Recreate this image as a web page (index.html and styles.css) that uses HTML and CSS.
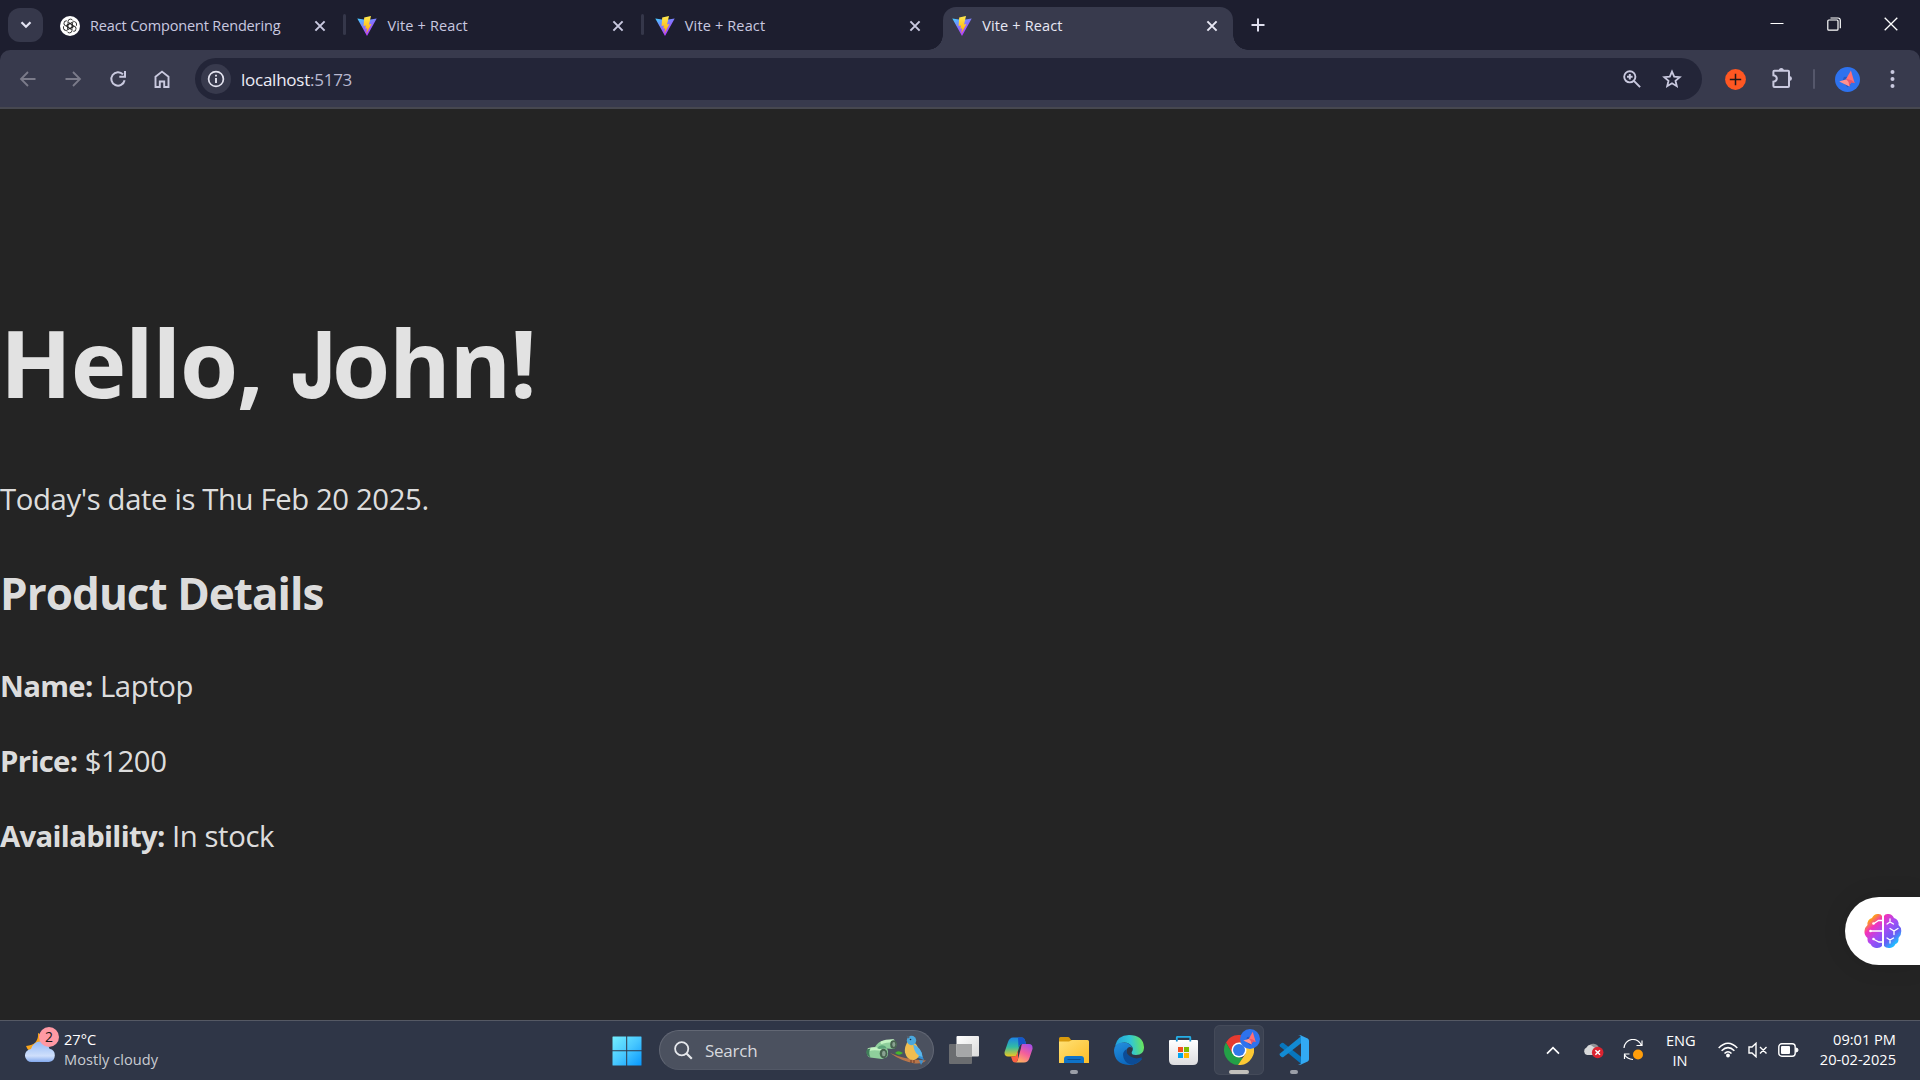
FILE: index.html
```html
<!DOCTYPE html>
<html lang="en">
<head>
<meta charset="utf-8">
<title>Vite + React</title>
<link rel="stylesheet" href="styles.css">
</head>
<body>
<svg class="defs" width="0" height="0" aria-hidden="true">
  <defs>
    <linearGradient id="viteBody" x1="0" y1="0" x2=".6" y2="1"><stop offset="0" stop-color="#41d1ff"/><stop offset=".55" stop-color="#8a6cff"/><stop offset="1" stop-color="#bd34fe"/></linearGradient>
    <linearGradient id="viteBolt" x1="0" y1="0" x2="0" y2="1"><stop offset="0" stop-color="#ffea50"/><stop offset="1" stop-color="#ffa800"/></linearGradient>
    <symbol id="vite" viewBox="0 0 20 20">
      <path d="M.3 2.400 10 20 19.700 2.400 10.400 4.100Z" fill="url(#viteBody)"/>
      <path d="M14 .1 7.200 1.400 6.600 10l2.300-.5-.6 3.300 1.900-.5-.9 5.200 5.200-9.400-2.500.5Z" fill="url(#viteBolt)"/>
    </symbol>
    <symbol id="close" viewBox="0 0 12 12"><path d="M1.400 1.400l9.200 9.200M10.600 1.400l-9.200 9.200" stroke="currentColor" stroke-width="2" fill="none"/></symbol>
    <symbol id="bird" viewBox="0 0 24 24">
      <circle cx="12" cy="12" r="12" fill="#2e72ee"/>
      <path d="M8.500 9.500 7 14l5 5.500 3-2.500V9Z" fill="#2459c4"/>
      <path d="M15.300 3.300 18.800 15.300 14.800 13.600 10.600 11.600Z" fill="#ff7075"/>
      <path d="M4 13.800 11 11.700 15.500 14 13.800 18.700Z" fill="#ff918f"/>
      <path d="M10.600 11.600 15.500 12.500 19.500 15.400 15.300 15.200 13.800 18.700 13 14.500Z" fill="#e9566a"/>
    </symbol>
  </defs>
</svg>

<header class="browser">
  <div class="tab-strip">
    <button class="tab-search" aria-label="Search tabs"><svg width="12" height="8" viewBox="0 0 12 8"><path d="M1.500 1.200 6 5.800l4.500-4.600" stroke="currentColor" stroke-width="2.200" fill="none"/></svg></button>
    <div class="tabs">
      <div class="tab">
        <svg class="favicon" viewBox="0 0 20 20"><circle cx="10" cy="10" r="10" fill="#fff"/><g fill="none" stroke="#222" stroke-width=".9"><path id="petal" d="M8 7.400V5.300Q8.300 3.100 10.500 3.100 12.200 3.200 12.900 4.500M8 7.400v4.200l3.700 2.100"/><use href="#petal" transform="rotate(60 10 10)"/><use href="#petal" transform="rotate(120 10 10)"/><use href="#petal" transform="rotate(180 10 10)"/><use href="#petal" transform="rotate(240 10 10)"/><use href="#petal" transform="rotate(300 10 10)"/></g></svg>
        <span class="tab-title tab-title-long">React Component Rendering</span><svg class="tab-close"><use href="#close"/></svg>
      </div>
      <div class="tab divided"><svg class="favicon"><use href="#vite"/></svg><span class="tab-title">Vite + React</span><svg class="tab-close"><use href="#close"/></svg></div>
      <div class="tab divided"><svg class="favicon"><use href="#vite"/></svg><span class="tab-title">Vite + React</span><svg class="tab-close"><use href="#close"/></svg></div>
      <div class="tab active"><svg class="favicon"><use href="#vite"/></svg><span class="tab-title">Vite + React</span><svg class="tab-close"><use href="#close"/></svg></div>
    </div>
    <svg class="new-tab" width="14" height="14" viewBox="0 0 14 14"><path d="M7 .5v13M.5 7h13" stroke="currentColor" stroke-width="2"/></svg>
    <div class="window-buttons">
      <svg width="14" height="14" viewBox="0 0 14 14"><path d="M.5 6.500h13" stroke="#fff"/></svg>
      <svg width="14" height="14" viewBox="0 0 14 14"><g fill="none" stroke="#fff" stroke-width="1.200"><rect x=".8" y="3" width="10.200" height="10.200" rx="1"/><path d="M3.500 1H11q2.300 0 2.300 2.300v8"/></g></svg>
      <svg width="14" height="14" viewBox="0 0 14 14"><path d="M.7.7l12.600 12.600M13.300.7.7 13.300" stroke="#fff" stroke-width="1.300"/></svg>
    </div>
  </div>
  <div class="toolbar">
    <nav class="nav-buttons">
      <svg class="dim" width="18" height="18" viewBox="0 0 18 18"><path d="M16.500 9h-14M9 2 2 9l7 7" stroke="currentColor" stroke-width="1.800" fill="none"/></svg>
      <svg class="dim" width="18" height="18" viewBox="0 0 18 18"><path d="M1.500 9h14M9 2l7 7-7 7" stroke="currentColor" stroke-width="1.800" fill="none"/></svg>
      <svg width="18" height="18" viewBox="0 0 18 18"><path d="M15.600 10.300A6.700 6.700 0 1 1 14 4.400M16 1v5.700h-5.700" stroke="currentColor" stroke-width="2" fill="none"/></svg>
      <svg width="18" height="18" viewBox="0 0 18 18"><path d="M2.500 17V6.800L9 1.600l6.500 5.200V17h-4.300v-5.500H6.800V17Z" stroke="currentColor" stroke-width="1.900" fill="none"/></svg>
    </nav>
    <div class="omnibox">
      <span class="site-info"><svg width="18" height="18" viewBox="0 0 18 18"><circle cx="9" cy="9" r="7.400" fill="none" stroke="currentColor" stroke-width="1.700"/><path d="M9 8v5M9 4.800v1.800" stroke="currentColor" stroke-width="1.900"/></svg></span>
      <span class="url">localhost<span class="port">:5173</span></span>
      <svg class="magnify" width="18" height="18" viewBox="0 0 18 18"><circle cx="6.800" cy="6.800" r="5.600" fill="none" stroke="currentColor" stroke-width="1.900"/><path d="M10.900 10.900l6.200 6.200M6.800 4v5.600M4 6.800h5.600" stroke="currentColor" stroke-width="2" fill="none"/></svg>
      <svg width="20" height="20" viewBox="0 0 20 20"><path d="M10 2.600l2.200 5.100 5.500.5-4.200 3.600 1.300 5.400-4.800-2.900-4.800 2.900 1.300-5.400L2.300 8.200l5.500-.5Z" fill="none" stroke="currentColor" stroke-width="1.800"/></svg>
    </div>
    <div class="extensions">
      <svg width="21" height="21" viewBox="0 0 21 21"><circle cx="10.500" cy="10.500" r="10.400" fill="#ff5722"/><path d="M10.500 4.800v11.400M4.800 10.500h11.400" stroke="#201819" stroke-width="1.500"/></svg>
      <svg class="puzzle" width="22" height="22" viewBox="0 0 22 22"><path d="M3.400 3.800H17a1 1 0 0 1 1 1V19a1 1 0 0 1-1 1H3.400a1 1 0 0 1-1-1v-4.300q3.400-.6 3.400-3.200T2.400 8.300V4.800a1 1 0 0 1 1-1Z" fill="none" stroke="currentColor" stroke-width="2"/><path d="M7.800 3.500a2.500 2.500 0 0 1 5 0M18.500 9a2.500 2.500 0 0 1 0 5" fill="currentColor"/></svg>
      <span class="bar"></span>
      <svg width="25" height="25"><use href="#bird"/></svg>
      <svg class="menu" width="5" height="20" viewBox="0 0 5 20"><g fill="currentColor"><circle cx="2.500" cy="3" r="2"/><circle cx="2.500" cy="10" r="2"/><circle cx="2.500" cy="17" r="2"/></g></svg>
    </div>
  </div>
</header>

<main class="page">
  <div class="root">
    <h1>Hello, <span class="initial">J</span>ohn!</h1>
    <p class="date">Today's date is Thu Feb 20 2025.</p>
    <h2>Product Details</h2>
    <p><strong>Name:</strong> Laptop</p>
    <p><strong>Price:</strong> $1200</p>
    <p><strong>Availability:</strong> In stock</p>
  </div>
  <aside class="assistant">
    <svg width="38" height="36" viewBox="0 0 38 36">
      <defs><linearGradient id="brain" x1="0" y1="0" x2="1" y2="1"><stop offset=".14" stop-color="#ffb000"/><stop offset=".3" stop-color="#f432b8"/><stop offset=".5" stop-color="#a94af4"/><stop offset=".7" stop-color="#6b5cf5"/><stop offset=".85" stop-color="#20b9ff"/></linearGradient></defs>
      <path fill="url(#brain)" d="M18 3v30q-2 2.500-6 2-4-.5-5.500-4-3.500-1-3-6Q0 22 .5 18T3.500 12Q3 6.500 8 5q2-4 5.500-4Q17 .5 18 3ZM20 3v30q2 2.500 6 2 4-.5 5.500-4 3.500-1 3-6 3-3 2.800-7T34.500 12q.5-5.500-4.500-7-2-4-5.500-4Q21 .5 20 3Z"/>
      <g fill="none" stroke="#fff" stroke-width="1.300" stroke-linecap="round"><path d="M18 7.500h-3.500L10 10.500M18 18H7M18 29h-3l-5-2.500M23 11l3-2 3.500 2M26 9V6M26 15.500l4 2.500 4-2.500M30 18v3.500M23 25l3 2 3.500-2M26 27v3"/></g>
      <g fill="#fff"><circle cx="9.500" cy="10.500" r="1.300"/><circle cx="6.500" cy="18" r="1.300"/><circle cx="9.500" cy="26" r="1.300"/></g>
    </svg>
  </aside>
</main>

<footer class="taskbar">
  <div class="weather">
    <div class="weather-icon">
      <svg width="31" height="31" viewBox="0 0 31 31"><defs><linearGradient id="cloud" x1="0" y1="0" x2="0" y2="1"><stop offset="0" stop-color="#94baf6"/><stop offset=".7" stop-color="#cfdffb"/><stop offset="1" stop-color="#82a9ee"/></linearGradient></defs><path d="M13 0Q14 12 1 13q2 6 9 6 9-1 9-10Q18 2 13 0Z" fill="#f9a51b"/><path d="M7 29a6.500 6.500 0 0 1-1-13 9.500 9.500 0 0 1 18.500-.2A6.700 6.700 0 0 1 24 29Z" fill="url(#cloud)"/></svg>
      <span class="badge">2</span>
    </div>
    <div class="weather-text"><div class="temp">27°C</div><div class="condition">Mostly cloudy</div></div>
  </div>

  <div class="apps">
    <svg class="start" width="30" height="30" viewBox="0 0 30 30"><defs><linearGradient id="win" x1="0" y1="0" x2="1" y2="1"><stop offset="0" stop-color="#74efff"/><stop offset=".5" stop-color="#48c8ff"/><stop offset="1" stop-color="#0797fd"/></linearGradient></defs><path fill="url(#win)" d="M1 .5h13.200v13.800H.5V1Q.5.500 1 .5ZM15.200.5H29q.5 0 .5.5v13.300H15.200ZM.5 15.300h13.700v14.200H1q-.5 0-.5-.5ZM15.200 15.300h14.300V29q0 .5-.5.5H15.200Z"/></svg>
    <div class="search">
      <svg width="19" height="19" viewBox="0 0 19 19"><circle cx="7.700" cy="7.700" r="6.600" fill="none" stroke="#e6e8ec" stroke-width="1.800"/><path d="M12.500 12.500l5.300 5.300" stroke="#e6e8ec" stroke-width="2.200"/></svg>
      <span class="search-label">Search</span>
      <svg class="search-art" width="62" height="31" viewBox="0 0 62 31">
        <path d="M2 15Q6 12 10 12Q13 7 17 6L28 4.500Q31 6 31.500 9.500 31 13.500 28 14L22 13.500Q24 17 22 22L17 24 5 22.500Q1 21 2 15Z" fill="#8fcf9c"/>
        <path d="M4 14.500Q8 13 19 14.500M17 7.500Q20 6 28 5.800" stroke="#c3f3c2" stroke-width="3" stroke-linecap="round" fill="none"/>
        <path d="M2.500 14Q0 17 2.500 20.500l3 2Q3 18 5.500 13.500Z" fill="#3f7d59"/><path d="M12 13q3-4 8-2l2 2.500-8 .500Z" fill="#5da479"/>
        <ellipse cx="28.500" cy="9.500" rx="3.300" ry="4.300" fill="#47634f"/><ellipse cx="18.500" cy="18.500" rx="3.800" ry="4.800" fill="#47634f"/><ellipse cx="28.800" cy="9.500" rx="1.500" ry="2.400" fill="#8aa292"/><ellipse cx="18.800" cy="18.500" rx="1.800" ry="2.700" fill="#8aa292"/>
        <path d="M25 18Q40 25 61 25.500q-3 3.500-11 3Q36 26 25 18Z" fill="#b8754a"/><path d="M30 18q3-3.500 8 0-4 3.500-8 0Z" fill="#46b72b"/>
        <path d="M49 12Q57 14 57 20l2 5-8-3Z" fill="#348fd4"/><path d="M43.500 5Q39 12 40 17.500q2 8 9 7.500 6-2 5.500-8Q53 9 47 6Z" fill="#efbd50"/><path d="M48 9q9 4 9.500 13-8-1-9.500-13Z" fill="#59b6ec"/><circle cx="46.500" cy="5.500" r="4.700" fill="#4aa7dc"/><path d="M43.500 3.500 41 .5l4 1.200Z" fill="#56616e"/><circle cx="45.500" cy="4.500" r=".8" fill="#17283d"/><path d="M54 25l2 5 2.500-4.500Z" fill="#3e92d0"/><path d="M46 25v3M49 25v3" stroke="#6a3b24"/>
      </svg>
    </div>
    <div class="app"><svg width="30" height="28" viewBox="0 0 30 28"><defs><linearGradient id="tv" x1="0" y1="0" x2="1" y2="1"><stop stop-color="#fff"/><stop offset="1" stop-color="#dadada"/></linearGradient></defs><rect y="8" width="23" height="20" rx="1" fill="#6b6d70"/><rect x="7.500" width="22.500" height="20.500" rx="1" fill="url(#tv)"/><path d="M7.500 8H23v12.500H8.500q-1 0-1-1Z" fill="#a6a7a8"/></svg></div>
    <div class="app"><svg width="29" height="26" viewBox="0 0 29 26"><defs><linearGradient id="cpa" x1="0" y1="0" x2="0" y2="1"><stop stop-color="#1c83e8"/><stop offset=".5" stop-color="#32bca2"/><stop offset="1" stop-color="#f2c71c"/></linearGradient><linearGradient id="cpb" x1=".8" y1="0" x2=".3" y2="1"><stop stop-color="#a44de8"/><stop offset=".5" stop-color="#f45f9b"/><stop offset="1" stop-color="#ffb35f"/></linearGradient></defs><path d="M9 .5h9q2 0 2.700 2l1.400 4.500h-4q-2 0-2.700 2.300L12.700 18q-.6 1.600-2.700 1.600H4Q0 19.600.6 15L4 5Q5.600.5 9 .5Z" fill="url(#cpa)"/><path d="M14 .5h4q2 0 2.700 2l1.400 4.500h-4q-2.600 0-3.500 4Z" fill="#1555c9"/><path d="M18.500 7H25q4 0 3.500 5l-3.200 9.500Q24 25.600 20 25.600h-9q2 0 2.700-2.300L17 11Q17.500 7 18.500 7Z" fill="url(#cpb)"/><path d="M7 19.500h3q2 0 2.600-1.700L14 13.500V22q-.6 3.600-3 3.600-2 0-2.700-2Z" fill="#fb6042"/></svg></div>
    <div class="app running"><svg width="30" height="28" viewBox="0 0 30 28"><defs><linearGradient id="fold" x1="0" y1="0" x2="1" y2="1"><stop stop-color="#ffe176"/><stop offset="1" stop-color="#fdbd26"/></linearGradient></defs><path d="M0 2.500Q0 1 1.500 1H9q1 0 1.500.7L12 4h12v8H0Z" fill="#d89a0c"/><path d="M0 5.500h10L13 4h15.500Q30 4 30 5.500V27H0Z" fill="url(#fold)"/><path d="M5 27v-4q0-3 3-3h14q3 0 3 3v4Z" fill="#0f73c8"/><path d="M8.500 23.500h13" stroke="#0b4f91"/></svg></div>
    <div class="app"><svg width="30" height="30" viewBox="0 0 30 30"><defs><linearGradient id="edgeTop" x1="0" y1=".5" x2="1" y2=".4"><stop stop-color="#219edb"/><stop offset=".55" stop-color="#31c7d5"/><stop offset="1" stop-color="#6ce656"/></linearGradient><linearGradient id="edgeLow" x1="0" y1="0" x2=".5" y2="1"><stop stop-color="#2490de"/><stop offset="1" stop-color="#0a65bb"/></linearGradient></defs><path d="M1 11Q3.500 0 15 0q14 0 15 12 .3 7.800-8 8-5 .1-4.200-3 2-3 .2-5.500Q12 4 1 11Z" fill="url(#edgeTop)"/><path d="M0 15Q1 7.500 9 7.500q7 0 9.300 5.300-4-2.500-5.800 2.500-2 10.500 15.500 8.700Q23 30 15 30 0 29 0 15Z" fill="url(#edgeLow)"/><path d="M12.600 14q-5 3-3 9 2.300 6 8.400 6.700 6-.8 9.900-6.400.5-1-.7-.7-6 2-10.700-1-5-3-3.900-7.600Z" fill="#0c4c96"/></svg></div>
    <div class="app"><svg width="29" height="29" viewBox="0 0 29 29"><defs><linearGradient id="bag" x1="0" y1="0" x2="0" y2="1"><stop stop-color="#fff"/><stop offset="1" stop-color="#dddddf"/></linearGradient></defs><path d="M7.800 6V1.800Q7.800.8 8.800.8h11.500q1 0 1 1V6" fill="none" stroke="#25aee6" stroke-width="1.800"/><path d="M1 4h27q1 0 1 1v19q0 5-5 5H5q-5 0-5-5V5q0-1 1-1Z" fill="url(#bag)"/><path d="M7.800 3.500v2M21.300 3.500v2" stroke="#168dcc" stroke-width="1.800"/><path d="M9 11h5v5H9Z" fill="#f25022"/><path d="M15 11h5v5h-5Z" fill="#7fba00"/><path d="M9 17h5v5H9Z" fill="#00a4ef"/><path d="M15 17h5v5h-5Z" fill="#ffb900"/></svg></div>
    <div class="app running focused"><svg width="30" height="30" viewBox="0 0 30 30"><path d="M2 7.500A15 15 0 0 1 28 7.500L15 8l-6.500 10.700Z" fill="#e63a30"/><path d="M2 7.500 8.500 18.800 15 22.500l4 .5-5 7A15 15 0 0 1 2 7.500Z" fill="#23a047"/><path d="M28 7.500H15L21.500 18.700 14 30A15 15 0 0 0 28 7.500Z" fill="#fcc934"/><circle cx="15" cy="15" r="7.500" fill="#fff"/><circle cx="15" cy="15" r="6" fill="#3279ea"/></svg><svg class="profile-badge"><use href="#bird"/></svg></div>
    <div class="app running"><svg width="30" height="30" viewBox="0 0 30 30"><path d="M1 9.500 2.600 8q.9-.7 1.900 0L23 22.500v7L1 11.500Q0 10.500 1 9.500Z" fill="#0876bd"/><path d="M1 20.500 2.600 22q.9.700 1.900 0L23 7.500v-7L1 18.500Q0 19.500 1 20.500Z" fill="#128bd4"/><path d="M21.500.3 28.700 3.600Q30 4.300 30 5.700v18.600q0 1.400-1.300 2.100l-7.200 3.300q-1.500.6-2.500-.5Q22 30.500 22 27V3Q22-.5 19 .8q1-1 2.500-.5Z" fill="#32a9f2"/></svg></div>
  </div>

  <div class="tray">
    <svg class="chevron" width="14" height="9" viewBox="0 0 14 9"><path d="M1 7.700 7 1.700l6 6" fill="none" stroke="#fff" stroke-width="1.700"/></svg>
    <svg class="onedrive" width="21" height="18" viewBox="0 0 21 18"><path d="M5 6a6 6 0 0 1 11 1v6H5Z" fill="#919396"/><path d="M4 14a4 4 0 0 1-.5-7.500Q6 2.500 9.500 5.200L15 9v5Z" fill="#d8d9da"/><circle cx="14.700" cy="11.500" r="5.800" fill="#db2430"/><path d="M12.400 9.200l4.600 4.600M17 9.200l-4.600 4.600" stroke="#fff" stroke-width="1.400"/></svg>
    <svg class="sync" width="21" height="22" viewBox="0 0 21 22"><path d="M1 9A9 9 0 0 1 18.500 6.500M19 1.500v5h-5.500M6.500 15H1.500v5M1.500 15.500Q4 20 10 20.500" fill="none" stroke="#fff" stroke-width="1.200"/><circle cx="15" cy="15.500" r="5" fill="#ff9e0b"/></svg>
    <div class="language"><div>ENG</div><div>IN</div></div>
    <svg class="wifi" width="20" height="16" viewBox="0 0 20 16"><g fill="none" stroke="#fff" stroke-width="1.500"><path d="M.7 6Q10-3.500 19.300 6M3.600 8.800Q10 2.500 16.400 8.800M6.500 11.600Q10 8 13.500 11.600"/></g><circle cx="10" cy="13.500" r="1.900" fill="#fff"/></svg>
    <svg class="volume" width="20" height="16" viewBox="0 0 20 16"><path d="M1 5h3l4-3.700v13.400L4 11H1ZM12 5l6.500 6.500M18.500 5 12 11.500" fill="none" stroke="#fff" stroke-width="1.400"/></svg>
    <svg class="battery" width="21" height="14" viewBox="0 0 21 14"><rect x=".8" y=".8" width="16.400" height="12.400" rx="3" fill="none" stroke="#fff" stroke-width="1.400"/><rect x="3" y="3" width="9" height="8" rx="1" fill="#fff"/><path d="M18 5q2 0 2 2t-2 2Z" fill="#fff" stroke="#fff"/></svg>
    <div class="clock"><div class="time">09:01 PM</div><div class="today">20-02-2025</div></div>
  </div>
</footer>
</body>
</html>
```
FILE: styles.css
```css
* { box-sizing: border-box; }
body {
  margin: 0;
  width: 1920px;
  height: 1080px;
  overflow: hidden;
  display: flex;
  flex-direction: column;
  background: #242424;
  font-family: "Open Sans", "Noto Sans", sans-serif;
  white-space: nowrap;
}
svg { display: block; flex: none; }
.defs { position: absolute; }

/* Browser window */
.browser { height: 109px; background: #1d1e2f; color: #c9c9e0; flex: none; }
.tab-strip { display: flex; height: 50px; padding-left: 8px; }
.tab-search {
  width: 35px; height: 34px; margin-top: 8px; padding: 0;
  display: flex; align-items: center; justify-content: center;
  border: 0; border-radius: 12px;
  background: #36384b; color: #e3e3f2;
}
.tabs { display: flex; margin-left: 8px; }
.tab {
  position: relative;
  width: 297.4px; height: 43px; margin-top: 7px; padding: 0 21px 6px 9px;
  display: flex; align-items: center;
}
.divided::before {
  content: ""; position: absolute; left: -5px; top: 7px;
  width: 3px; height: 21px; border-radius: 2px; background: #35374a;
}
.tab.active {
  width: 290px; padding-right: 14px;
  border-radius: 13px 13px 0 0;
  background: #383a4d; color: #e8e8f4;
}
.active::before, .active::after {
  content: ""; position: absolute; bottom: 0; width: 15px; height: 15px;
}
.active::before { left: -15px; background: radial-gradient(circle at 0 0, transparent 14.5px, #383a4d 15px); }
.active::after { right: -15px; background: radial-gradient(circle at 100% 0, transparent 14.5px, #383a4d 15px); }
.favicon { width: 20px; height: 20px; }
.tab-title { margin-left: 10px; flex: 1; font-size: 14.5px; letter-spacing: .15px; }
.tab-title-long { letter-spacing: -.15px; }
.tab-close { width: 12px; height: 12px; margin-right: 1px; }
.new-tab { margin: 18px 0 0 18px; color: #dedeed; }
.window-buttons { display: flex; gap: 43px; margin: 17px 22px 0 auto; }

.toolbar {
  display: flex; align-items: center;
  height: 59px; padding: 1px 25px 0 19px;
  border-bottom: 2px solid #474850;
  border-radius: 10px 10px 0 0;
  background: #383a4d; color: #c9c9df;
}
.nav-buttons { display: flex; gap: 26.8px; width: 176px; }
.dim { color: #7b7b8a; }
.omnibox {
  display: flex; align-items: center;
  width: 1507px; height: 42px; padding: 0 20px 0 6px;
  border-radius: 21px;
  background: #232538;
}
.site-info {
  width: 30px; height: 30px; border-radius: 50%;
  display: flex; align-items: center; justify-content: center;
  background: #383a4d; color: #e3e3ef;
}
.url { flex: 1; margin-left: 10px; font-size: 17px; letter-spacing: -.25px; color: #ececf6; }
.port { color: #b9b9d1; }
.magnify { margin-right: 21px; }
.extensions { display: flex; align-items: center; flex: 1; padding-left: 23px; }
.puzzle { margin: -3px 0 0 25px; }
.bar { width: 2px; height: 20px; margin: 0 20px; border-radius: 1px; background: #55576b; }
.menu { margin-left: auto; }

/* React page */
.page {
  position: relative;
  flex: 1;
  display: flex; align-items: center;
  background: #242424; color: rgba(255, 255, 255, .87);
}
.root { padding-top: 4px; font-size: 29.3px; line-height: 45px; }
.root h1 { margin: 66px 0 62px; font-size: 94px; line-height: 105.6px; letter-spacing: -1.2px; }
.initial {
  display: inline-block;
  margin: 0 -12px 0 5px;
  font-family: Inter, sans-serif; font-size: 92px; line-height: 1; font-weight: 800;
  transform: scaleX(.8); transform-origin: left;
}
.root p { margin: 30px 0; letter-spacing: -.38px; }
.root strong { letter-spacing: -.66px; }
.root h2 { margin: 37.4px 0; font-size: 44px; line-height: 67.5px; letter-spacing: -.95px; }
.assistant {
  position: absolute; right: 0; top: 788px;
  width: 75px; height: 68px; padding: 16px 0 0 18.5px;
  border-radius: 34px 0 0 34px;
  background: #fff;
  box-shadow: 0 0 24px rgba(0, 0, 0, .12);
}

/* Windows taskbar */
.taskbar {
  display: flex; flex: none;
  height: 60px;
  border-top: 1px solid #555964;
  background: #2f3647;
  color: #fff; font-size: 14.600px; line-height: 20px;
}
.weather { display: flex; width: 612px; padding: 6px 0 0 25px; }
.weather-icon { position: relative; width: 39px; padding-top: 6px; }
.badge {
  position: absolute; left: 14px; top: 0;
  width: 20px; height: 20px; border-radius: 50%;
  background: #ff99a4; color: #171717;
  font-size: 14px; line-height: 20px; text-align: center;
}
.weather-text { padding-top: 2px; }
.condition { color: #c9ccd2; letter-spacing: .05px; }
.apps { display: flex; align-items: center; height: 58px; }
.start { margin-top: 1px; }
.search {
  display: flex; align-items: center;
  width: 275px; height: 40px; margin: 0 2px 0 17px; padding: 0 6px 0 14px;
  border: 1px solid #626774; border-bottom-color: #525866; border-radius: 20px;
  background: #4b515f;
}
.search-label { margin: 1px 0 0 12px; flex: 1; font-size: 17px; color: #d7d9de; letter-spacing: -.25px; }
.app {
  position: relative;
  width: 50px; height: 50px; margin-left: 2.5px; margin-right: 2.5px;
  display: flex; align-items: center; justify-content: center;
}
.running::after {
  content: ""; position: absolute; left: 21px; bottom: 1px;
  width: 8px; height: 4px; border-radius: 2px; background: #9b9fa8;
}
.focused { border-radius: 6px; background: #3b4252; box-shadow: inset 0 0 0 1px #444a59; }
.focused::after { left: 15px; width: 20px; background: #c3c1bc; }
.profile-badge { position: absolute; left: 26px; top: 4px; width: 20px; height: 20px; }
.tray { display: flex; align-items: center; height: 58px; margin-left: auto; padding-right: 24px; }
.onedrive { margin-left: 23px; }
.sync { margin-left: 19px; }
.language { width: 28px; margin-left: 22px; text-align: center; }
.wifi { margin-left: 24px; }
.volume { margin-left: 10px; }
.battery { margin-left: 10px; }
.clock { width: 76px; margin: -2px 0 0 21px; display: flex; flex-direction: column; align-items: flex-end; }
```
